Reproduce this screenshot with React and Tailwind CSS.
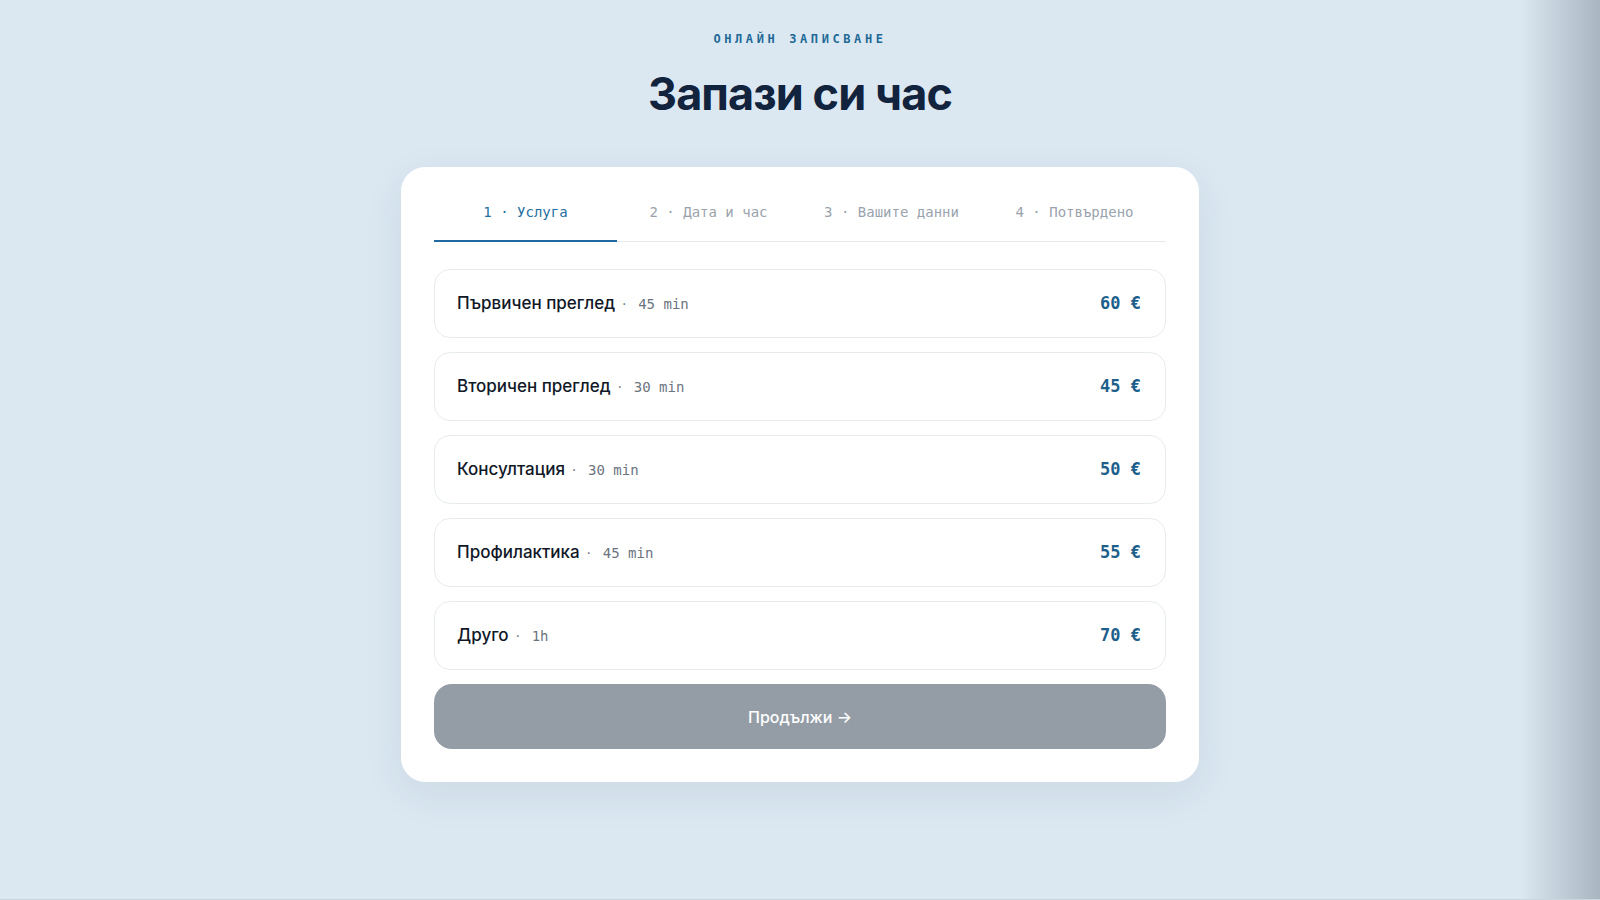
const services = [
  { name: "Първичен преглед", duration: "45 min", price: "60 €" },
  { name: "Вторичен преглед", duration: "30 min", price: "45 €" },
  { name: "Консултация", duration: "30 min", price: "50 €" },
  { name: "Профилактика", duration: "45 min", price: "55 €" },
  { name: "Друго", duration: "1h", price: "70 €" },
];

const steps = ["1 · Услуга", "2 · Дата и час", "3 · Вашите данни", "4 · Потвърдено"];

const sans = "font-['Inter','Noto_Sans',sans-serif]";
const mono = "font-['DejaVu_Sans_Mono','Liberation_Mono',monospace]";

export default function App() {
  return (
    <div
      lang="bg"
      className={`relative min-h-screen overflow-hidden border-b border-[#c9d5df] bg-[#dbe8f2] ${sans}`}
    >
      <main className="flex flex-col items-center pt-[31px] pb-16">
        <p className={`${mono} text-[12px] leading-4 font-bold tracking-[0.3em] text-[#1f6a96]`}>
          ОНЛАЙН ЗАПИСВАНЕ
        </p>
        <h1 className="mt-[23px] text-[45px] leading-[48px] font-bold tracking-[-0.02em] text-[#11233d]">
          Запази си час
        </h1>

        <div className="mt-[49px] w-[798px] rounded-3xl border border-white bg-white p-8 shadow-[0_12px_40px_rgba(20,45,75,0.08)]">
          <div className="grid grid-cols-4 border-b border-[#e6eaee]">
            {steps.map((s, i) => (
              <div
                key={s}
                className={`-mb-px pt-[2px] pb-[18px] text-center ${mono} text-[14px] leading-5 ${
                  i === 0
                    ? "border-b-2 border-[#1f6a9e] text-[#1f6f9f]"
                    : "border-b-2 border-transparent text-[#9aa3ad]"
                }`}
              >
                {s}
              </div>
            ))}
          </div>

          <div className="mt-[27px] flex flex-col gap-[14px]">
            {services.map((s) => (
              <div
                key={s.name}
                className="flex h-[69px] items-center justify-between rounded-2xl border border-[#e7ebef] bg-white pr-6 pl-[22px]"
              >
                <div className="flex items-baseline">
                  <span className="text-[17px] font-medium text-[#111827]">{s.name}</span>
                  <span className="mr-3 ml-[7px] text-[14px] text-[#5f6873]">·</span>
                  <span className={`${mono} text-[14px] text-[#6b7480]`}>{s.duration}</span>
                </div>
                <span className={`${mono} text-[17px] font-bold text-[#1d5f8b]`}>{s.price}</span>
              </div>
            ))}
          </div>

          <button
            type="button"
            disabled
            className="mt-[14px] flex h-[65px] w-full items-center justify-center rounded-[18px] bg-[#949ca6] text-[16px] font-medium text-white"
          >
            Продължи →
          </button>
        </div>
      </main>

      <div className="pointer-events-none absolute top-0 right-0 h-full w-[80px] bg-gradient-to-r from-transparent to-[#a9b5c0]" />
    </div>
  );
}
